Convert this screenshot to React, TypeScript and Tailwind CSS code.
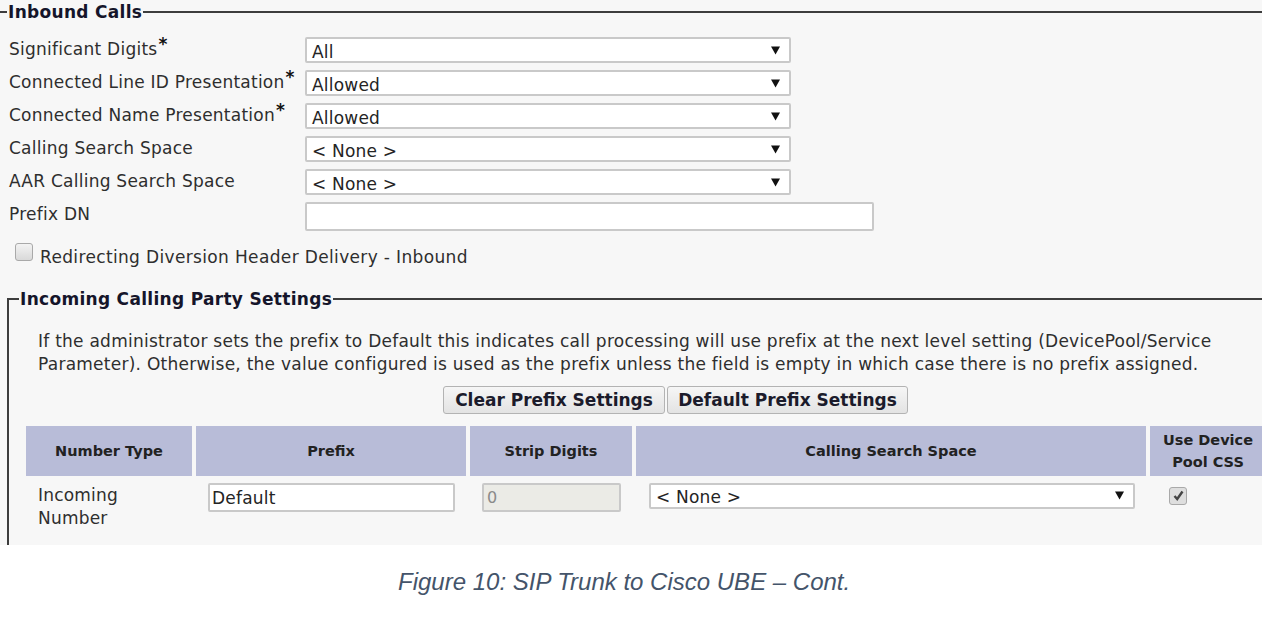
import type { ReactNode } from "react";

type Field = {
  label: string;
  required?: boolean;
  value?: string;
  kind: "select" | "text";
};

const inboundFields: Field[] = [
  { label: "Significant Digits", required: true, value: "All", kind: "select" },
  { label: "Connected Line ID Presentation", required: true, value: "Allowed", kind: "select" },
  { label: "Connected Name Presentation", required: true, value: "Allowed", kind: "select" },
  { label: "Calling Search Space", value: "< None >", kind: "select" },
  { label: "AAR Calling Search Space", value: "< None >", kind: "select" },
  { label: "Prefix DN", kind: "text" },
];

function Arrow() {
  return (
    <svg width="9" height="9" viewBox="0 0 9 9" className="shrink-0">
      <path d="M0 0.5h9L4.5 8.5z" fill="#111" />
    </svg>
  );
}

function Select({ value, className }: { value: string; className: string }) {
  return (
    <div
      className={`flex h-[26px] items-center justify-between rounded-[2px] border-2 border-[#c9c9c9] bg-white pl-[5px] pr-[9px] text-[17px] leading-[20px] tracking-[0.2px] text-[#242424] ${className}`}
    >
      <span className="mt-[3px] whitespace-pre">{value}</span>
      <Arrow />
    </div>
  );
}

function Checkbox({ checked }: { checked?: boolean }) {
  return (
    <div
      className={`flex h-[18px] w-[18px] shrink-0 items-center justify-center rounded-[3px] border border-[#a9a9a9] ${
        checked ? "bg-[#dedede]" : "bg-gradient-to-b from-[#f3f3f3] to-[#d9d9d9]"
      }`}
    >
      {checked && (
        <svg width="13" height="13" viewBox="0 0 13 13">
          <path d="M2.5 7L5.2 10L10.5 2.5" fill="none" stroke="#454545" strokeWidth="2.4" />
        </svg>
      )}
    </div>
  );
}

function Button({ children, className }: { children: ReactNode; className: string }) {
  return (
    <div
      className={`flex h-[28px] items-center justify-center rounded-[3px] border border-[#b3b3b3] bg-gradient-to-b from-[#f6f6f6] to-[#e3e3e3] text-[17px] font-bold leading-[20px] text-[#1b1b2b] ${className}`}
    >
      {children}
    </div>
  );
}

function HeaderCell({ children }: { children: ReactNode }) {
  return (
    <div className="flex h-[50px] items-center justify-center bg-[#b8bcd8] text-center text-[14.5px] font-bold leading-[22px] text-[#222]">
      {children}
    </div>
  );
}

export default function App() {
  return (
    <div className="h-[620px] w-[1270px] bg-white font-['DejaVu_Sans',sans-serif]">
      <div className="h-[545px] w-[1262px] overflow-hidden bg-[#f7f7f7]">
        <fieldset className="ml-[-14px] mt-[2px] min-h-[700px] w-[1360px] border-2 border-[#3d3d3d] pl-[19px]">
          <legend className="px-[1px] text-[17px] font-bold leading-[20px] tracking-[0.3px] text-[#15152a]">
            Inbound Calls
          </legend>

          <div className="mt-[15px] grid grid-cols-[298px_auto] gap-y-[7px]">
            {inboundFields.map((f) => (
              <div key={f.label} className="contents">
                <div className="pl-[2px] pt-[1.5px] text-[17px] leading-[20px] tracking-[0.25px] text-[#2e2e2e]">
                  {f.label}
                  {f.required && <span className="relative -top-[5px] ml-[1px] font-bold text-[#111]">*</span>}
                </div>
                {f.kind === "select" ? (
                  <Select value={f.value ?? ""} className="w-[486px]" />
                ) : (
                  <div className="h-[29px] w-[569px] rounded-[2px] border-2 border-[#c9c9c9] bg-white" />
                )}
              </div>
            ))}
          </div>

          <div className="mt-[12px] flex items-start">
            <div className="ml-[8px]">
              <Checkbox />
            </div>
            <span className="ml-[7px] mt-[4px] text-[17px] leading-[20px] tracking-[0.35px] text-[#2e2e2e]">
              Redirecting Diversion Header Delivery - Inbound
            </span>
          </div>

          <fieldset className="mt-[21.5px] min-h-[400px] w-[1320px] border-2 border-[#3d3d3d] pl-[10px]">
            <legend className="px-[1px] text-[17px] font-bold leading-[20px] tracking-[0.3px] text-[#15152a]">
              Incoming Calling Party Settings
            </legend>

            <p className="ml-[19px] mt-[21px] whitespace-nowrap text-[17px] leading-[23px] tracking-[0.25px] text-[#2e2e2e]">
              If the administrator sets the prefix to Default this indicates call processing will use prefix at the next
              level setting (DevicePool/Service
              <br />
              Parameter). Otherwise, the value configured is used as the prefix unless the field is empty in which case
              there is no prefix assigned.
            </p>

            <div className="ml-[424px] mt-[10px] flex gap-[2px]">
              <Button className="w-[222px]">Clear Prefix Settings</Button>
              <Button className="w-[241px]">Default Prefix Settings</Button>
            </div>

            <div className="ml-[7px] mt-[12px] grid grid-cols-[166px_270px_162px_510px_116px] gap-x-[4px]">
              <HeaderCell>Number Type</HeaderCell>
              <HeaderCell>Prefix</HeaderCell>
              <HeaderCell>Strip Digits</HeaderCell>
              <HeaderCell>Calling Search Space</HeaderCell>
              <HeaderCell>
                Use Device
                <br />
                Pool CSS
              </HeaderCell>

              <div className="pl-[12px] pt-[8px] text-[17px] leading-[23px] tracking-[0.2px] text-[#2e2e2e]">
                Incoming
                <br />
                Number
              </div>
              <div className="pl-[12px] pt-[7px]">
                <div className="flex h-[29px] w-[247px] items-center rounded-[2px] border-2 border-[#c9c9c9] bg-white pl-[2px] text-[17px] leading-[20px] tracking-[0.2px] text-[#242424]">
                  <span className="mt-[2px]">Default</span>
                </div>
              </div>
              <div className="pl-[12px] pt-[7px]">
                <div className="flex h-[29px] w-[139px] items-center rounded-[2px] border-2 border-[#c9c9c9] bg-[#ebebe6] pl-[3px] text-[16px] leading-[20px] text-[#8a8a8a]">
                  <span className="mt-[2px]">0</span>
                </div>
              </div>
              <div className="pl-[13px] pt-[7px]">
                <Select value="< None >" className="w-[486px]" />
              </div>
              <div className="pl-[19px] pt-[11px]">
                <Checkbox checked />
              </div>
            </div>
          </fieldset>
        </fieldset>
      </div>

      <p className="pl-[398px] pt-[23px] font-['Liberation_Sans',Arial,sans-serif] text-[24px] italic leading-[28px] text-[#44546a]">
        Figure 10: SIP Trunk to Cisco UBE – Cont.
      </p>
    </div>
  );
}
